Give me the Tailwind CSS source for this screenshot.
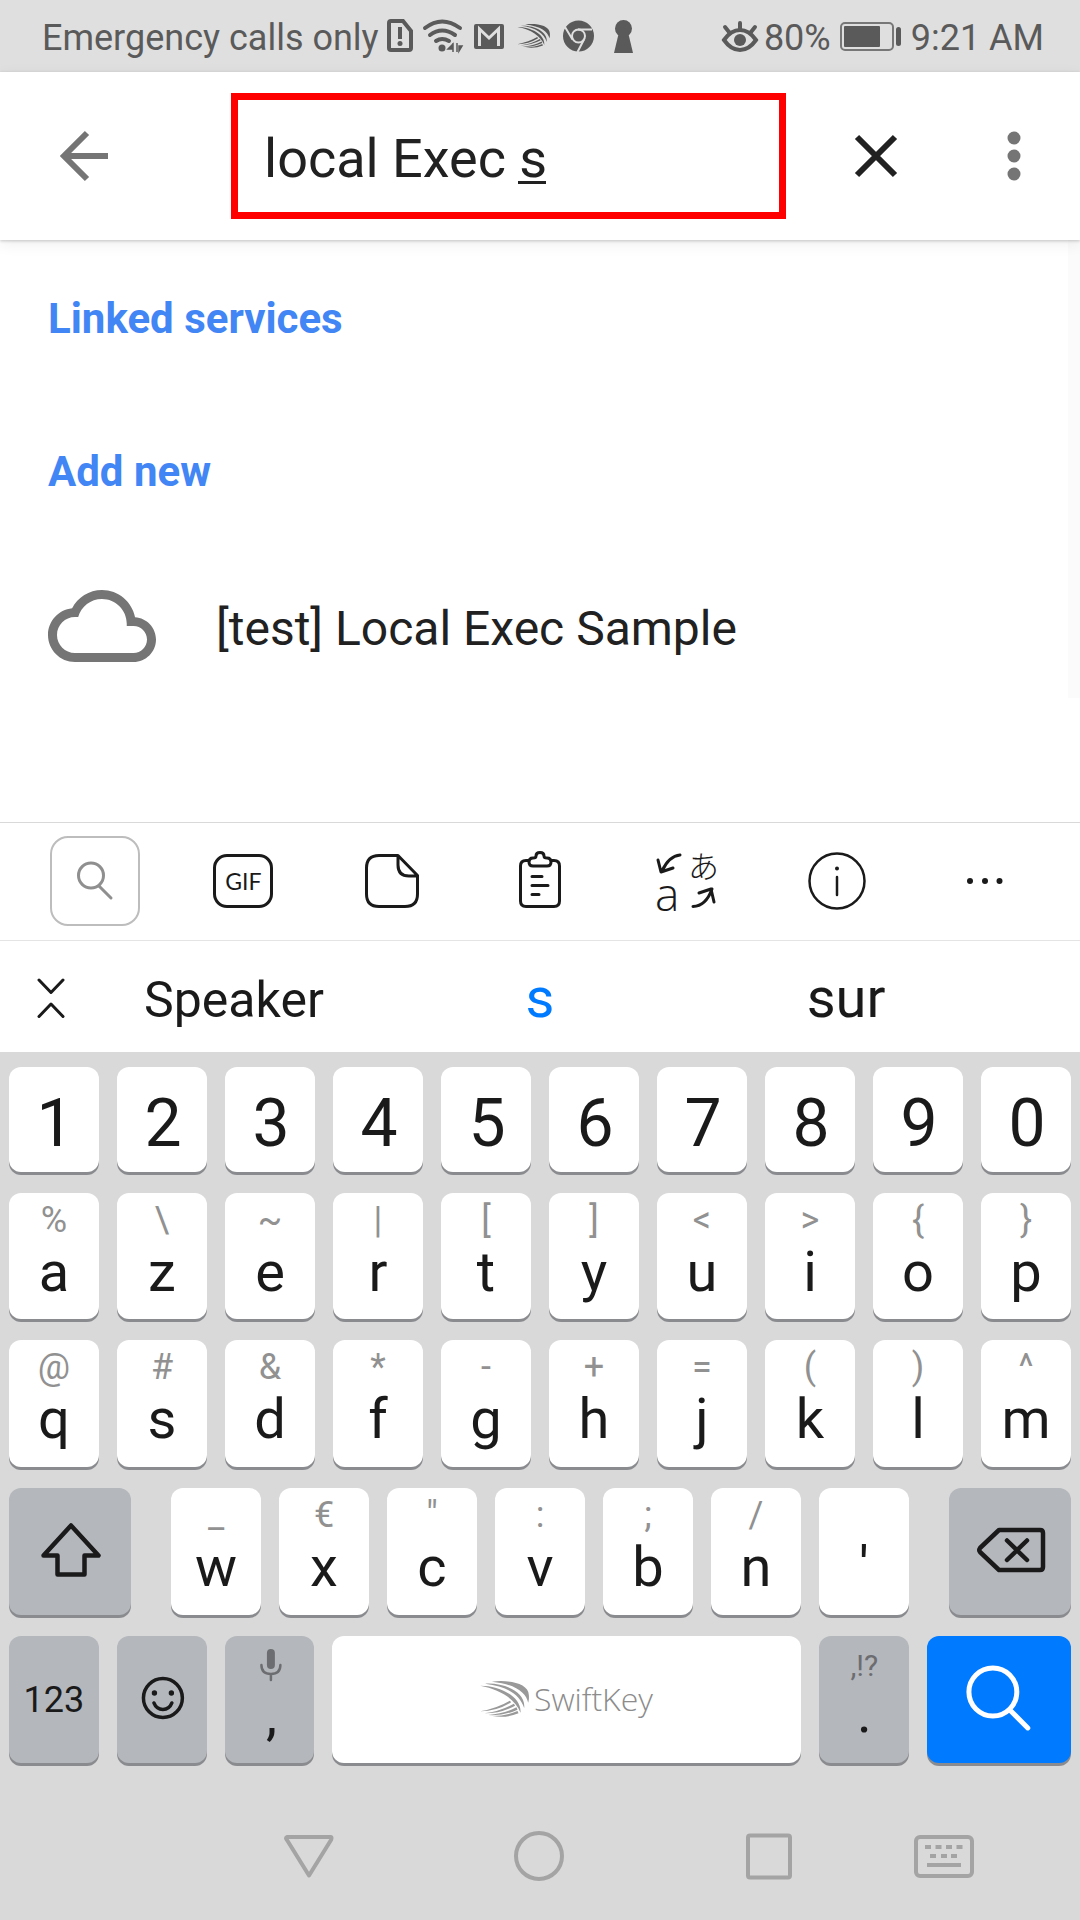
<!DOCTYPE html>
<html lang="en">
<head>
<meta charset="utf-8">
<meta name="viewport" content="width=device-width, initial-scale=1">
<title>Search services</title>
<script src="https://cdn.jsdelivr.net/npm/@tailwindcss/browser@4"></script>
</head>
<body class="flex min-h-screen flex-col bg-white font-['Roboto',sans-serif] text-[#212121]">

<!-- Status bar -->
<div class="flex h-[72px] shrink-0 items-center justify-between bg-[#dfdfdf] pl-[42px] pr-9 text-[36px] leading-[72px] text-[#5a5a5a]">
  <div class="flex items-center">
    <span class="whitespace-nowrap pt-[3px]">Emergency calls only</span>
    <svg class="ml-[5px] h-[72px] w-[254px] shrink-0" viewBox="384 0 254 72" fill="none" stroke="#5a5a5a" aria-hidden="true">
      <path d="M391 21h12l8 10v17q0 2-2 2h-18q-2 0-2-2V23q0-2 2-2z" stroke-width="4"/>
      <path d="M400 27v12" stroke-width="4"/><circle cx="400" cy="43.500" r="2.500" fill="#5a5a5a" stroke="none"/>
      <g stroke-width="4" stroke-linecap="round"><path d="M425 28q17-13 35 0M430 35q12-9 25 0M436 41q6-4 13 0"/></g>
      <circle cx="442" cy="48" r="3.500" fill="#5a5a5a" stroke="none"/>
      <path d="M453 43v9M453 44l-5 5h5zM457 43v9M459 46h3l-3 5z" fill="#5a5a5a" stroke-width="1.500"/>
      <rect x="474" y="24" width="30" height="25" rx="2" fill="#5a5a5a" stroke="none"/>
      <path d="M479.500 46V29L489 38L498.500 29V46" stroke="#dfdfdf" stroke-width="3"/>
      <g transform="translate(517 23.500) scale(.222) translate(-178 -91)" fill="#5a5a5a" stroke="none">
        <path d="M215 95C262 89 325 98 326 135C327 145 326 152 324 158C318 128 285 102 215 95Z"/>
        <path d="M195 101C250 97 318 125 312 174C300 135 262 109 195 101Z"/>
        <path d="M180 107C240 107 305 140 301 188C285 147 240 118 180 107Z"/>
        <path d="M180 184Q232 174 269 152L273 157Q230 184 180 184ZM192 190Q242 184 281 161L285 167Q242 190 192 190ZM204 195Q252 192 289 172L292 179Q252 198 204 195ZM217 198Q258 198 292 183L295 190Q258 205 217 198Z"/>
      </g>
      <circle cx="578.500" cy="36" r="15.500" fill="#5a5a5a" stroke="none"/>
      <g stroke="#dfdfdf" stroke-width="2"><circle cx="578.500" cy="36" r="6.500"/><path d="M578 29.500h14M572.500 39.500L565 27M584 39.500L577.500 52"/></g>
      <circle cx="623.500" cy="28.500" r="8.500" fill="#5a5a5a" stroke="none"/><path d="M619 32h9l5 21h-19z" fill="#5a5a5a" stroke="none"/>
    </svg>
  </div>
  <div class="flex items-center">
    <svg class="h-[72px] w-[40px] shrink-0" viewBox="721 0 40 72" fill="none" stroke="#5a5a5a" stroke-width="4" stroke-linecap="round" aria-hidden="true">
      <path d="M725 40q7-10 16-10t16 10q-7 10-16 10t-16-10z"/><path d="M741 23v6M726 27l4 5M756 27l-4 5"/><circle cx="741" cy="40" r="6" fill="#5a5a5a" stroke="none"/>
    </svg>
    <span class="ml-1 pt-[3px]">80%</span>
    <svg class="ml-2 h-[72px] w-[64px] shrink-0" viewBox="840 0 64 72" aria-hidden="true">
      <rect x="842" y="23" width="52" height="27" rx="4" fill="none" stroke="#777" stroke-width="2"/>
      <rect x="845" y="26" width="36" height="21" rx="1" fill="#5a5a5a"/><rect x="897" y="27" width="5" height="19" rx="2.500" fill="#5a5a5a"/>
    </svg>
    <time class="ml-2 whitespace-nowrap pt-[3px]">9:21 AM</time>
  </div>
</div>

<!-- Search header -->
<header class="z-10 flex h-[168px] shrink-0 items-center bg-white pl-9 pr-5 shadow-[0_1px_3px_rgba(0,0,0,0.2),0_4px_14px_rgba(0,0,0,0.07)]">
  <button class="shrink-0" aria-label="Back">
    <svg class="size-24" viewBox="36 108 96 96" fill="none" stroke="#757575" stroke-width="6"><path d="M108 156H64M87 133L64 156L87 179"/></svg>
  </button>
  <label class="relative ml-[99px] block h-[126px] min-w-0 flex-1 border-[7px] border-[#ff0000]">
    <input type="text" aria-label="Search" value="local Exec s" spellcheck="false" class="h-full w-full bg-transparent pl-[26px] pt-1 text-[54px] text-[#212121] outline-none">
    <span class="absolute left-[280px] top-[81px] h-[3px] w-[28px] bg-[#212121]" aria-hidden="true"></span>
  </label>
  <button class="ml-[42px] shrink-0" aria-label="Clear">
    <svg class="size-24" viewBox="828 108 96 96" fill="none" stroke="#212121" stroke-width="6"><path d="M857 137L895 175M895 137L857 175"/></svg>
  </button>
  <button class="ml-[54px] shrink-0" aria-label="More options">
    <svg class="h-24 w-[82px]" viewBox="978 108 82 96" fill="#757575"><circle cx="1014" cy="138" r="6.500"/><circle cx="1014" cy="156" r="6.500"/><circle cx="1014" cy="174" r="6.500"/></svg>
  </button>
</header>

<!-- Results -->
<main class="flex flex-1">
  <div class="flex-1 px-12 pt-[54px]">
    <h2 class="text-[42px] font-bold leading-[50px] text-[#4285f4]">Linked services</h2>
    <h2 class="mt-[103px] text-[42px] font-bold leading-[50px] text-[#4285f4]">Add new</h2>
    <a href="#" class="mt-[75px] flex items-center text-[48px] leading-[64px]">
      <svg class="size-[108px] shrink-0" viewBox="0 0 24 24" fill="#757575" aria-hidden="true"><path d="M19.350 10.040C18.670 6.590 15.640 4 12 4 9.110 4 6.610 5.640 5.360 8.040 2.350 8.360 0 10.910 0 14c0 3.310 2.690 6 6 6h13c2.760 0 5-2.240 5-5 0-2.640-2.050-4.780-4.650-4.960zM19 18H6c-2.210 0-4-1.790-4-4s1.790-4 4-4h.710C7.370 7.690 9.480 6 12 6c3.040 0 5.500 2.460 5.500 5.500v.500H19c1.660 0 3 1.340 3 3s-1.340 3-3 3z"/></svg>
      <span class="ml-[60px] pt-1.5">[test] Local Exec Sample</span>
    </a>
  </div>
  <div class="h-[458px] w-3 bg-[#fbfbfb]"></div>
</main>

<!-- Keyboard toolbar -->
<section class="grid h-[118px] shrink-0 grid-cols-7 items-center justify-items-center border-t border-[#d9d9d9] px-[21px] pb-0.5" aria-label="Keyboard toolbar">
  <button aria-label="Search" class="size-[90px] rounded-[18px] border-2 border-[#bdbdbd]">
    <svg class="size-full" viewBox="52 838 86 86" fill="none" stroke="#8f8f8f" stroke-width="3" stroke-linecap="round"><circle cx="91" cy="875.500" r="12.500"/><path d="M99 886L111 898"/></svg>
  </button>
  <button aria-label="GIF" class="h-[54px] w-[60px] rounded-[14px] border-3 border-[#1a1a1a] text-center font-['Lato',sans-serif] text-[23px] leading-[48px] text-[#1a1a1a]">GIF</button>
  <button aria-label="Stickers">
    <svg class="size-[90px]" viewBox="347 836 90 90" fill="none" stroke="#1a1a1a" stroke-width="3" stroke-linejoin="round"><path d="M398 855.500h-19q-12.500 0-12.500 12.500v26q0 12.500 12.500 12.500h26q12.500 0 12.500-12.500V875.500zM398 855.500V865q0 11 11 11h8.500"/></svg>
  </button>
  <button aria-label="Clipboard">
    <svg class="size-[90px]" viewBox="495 836 90 90" fill="none" stroke="#1a1a1a" stroke-width="3" stroke-linecap="round" stroke-linejoin="round"><path d="M529 860.500h-3q-5.500 0-5.500 5.500v35q0 5.500 5.500 5.500h28q5.500 0 5.500-5.500v-35q0-5.500-5.500-5.500h-3"/><path d="M533 866h14q4 0 4-4t-4-4q-3 0-3-2 0-3.500-4-3.500t-4 3.500q0 2-3 2-4 0-4 4t4 4zM532 876.500h10M532 885.500h16M532 894.500h7"/></svg>
  </button>
  <button aria-label="Translate">
    <svg class="size-[90px]" viewBox="643 836 90 90" fill="none" stroke="#1a1a1a" stroke-width="3" stroke-linecap="round" stroke-linejoin="round"><path d="M680 855Q669 856 662 871M658 860L661 872L673 868M693 906.500Q706 906 712 889M699 893L711 889L714 902"/><text x="688" y="877.500" font-family="Noto Sans CJK JP, sans-serif" font-weight="300" font-size="31" fill="#1a1a1a" stroke="none">あ</text><text x="655" y="911" font-family="Open Sans, sans-serif" font-weight="300" font-size="46" fill="#1a1a1a" stroke="none">a</text></svg>
  </button>
  <button aria-label="Information">
    <svg class="size-[90px]" viewBox="792 836 90 90" fill="none" stroke="#1a1a1a" stroke-width="2.500" stroke-linecap="round"><circle cx="837" cy="881" r="27.500"/><path d="M837 877v18"/><circle cx="837" cy="868.500" r="1" fill="#1a1a1a" stroke-width="2"/></svg>
  </button>
  <button aria-label="More">
    <svg class="size-[90px]" viewBox="940 836 90 90" fill="#1a1a1a"><circle cx="970" cy="881" r="3"/><circle cx="985" cy="881" r="3"/><circle cx="999.500" cy="881" r="3"/></svg>
  </button>
</section>

<!-- Word suggestions -->
<section class="flex h-[112px] shrink-0 items-center border-t border-[#e4e4e4] pt-0.5 text-[#1a1a1a]" aria-label="Suggestions">
  <button class="w-[81px]" aria-label="Collapse suggestions">
    <svg class="h-[60px] w-full" viewBox="0 969 81 60" fill="none" stroke="#1a1a1a" stroke-width="3" stroke-linecap="round" stroke-linejoin="round"><path d="M39 981L51 993.500L63 981M39 1017.500L51 1005L63 1017.500"/></svg>
  </button>
  <div class="grid flex-1 grid-cols-3 items-baseline pr-[81px] pt-0.5 text-center text-[56px] leading-[64px]">
    <button class="text-[50px]">Speaker</button>
    <button class="text-[#007aff]">s</button>
    <button>sur</button>
  </div>
</section>

<!-- Keys -->
<section class="flex shrink-0 flex-col gap-[21px] bg-[#d9d9d9] px-[9px] pb-[3px] pt-[15px] text-[56px] leading-[64px] text-[#1a1a1a]" aria-label="Keyboard">
  <div class="grid h-[105px] grid-cols-10 gap-[18px] text-[66px] *:rounded-xl *:bg-white *:pl-0.5 *:pt-[9px] *:shadow-[0_3px_0_#8a8b8f]">
    <button>1</button><button>2</button><button>3</button><button>4</button><button>5</button><button>6</button><button>7</button><button>8</button><button>9</button><button>0</button>
  </div>
  <div class="grid h-[126px] grid-cols-10 gap-[18px] *:flex *:flex-col *:items-center *:rounded-xl *:bg-white *:pt-[7px] *:shadow-[0_3px_0_#8a8b8f] [&_small]:text-[36px] [&_small]:leading-10 [&_small]:text-[#919191]">
    <button><small>%</small>a</button><button><small>\</small>z</button><button><small>~</small>e</button><button><small>|</small>r</button><button><small>[</small>t</button><button><small>]</small>y</button><button><small>&lt;</small>u</button><button><small>&gt;</small>i</button><button><small>{</small>o</button><button><small>}</small>p</button>
  </div>
  <div class="grid h-[127px] grid-cols-10 gap-[18px] *:flex *:flex-col *:items-center *:rounded-xl *:bg-white *:pt-[7px] *:shadow-[0_3px_0_#8a8b8f] [&_small]:text-[36px] [&_small]:leading-10 [&_small]:text-[#919191]">
    <button><small>@</small>q</button><button><small>#</small>s</button><button><small>&amp;</small>d</button><button><small>*</small>f</button><button><small>-</small>g</button><button><small>+</small>h</button><button><small>=</small>j</button><button><small>(</small>k</button><button><small>)</small>l</button><button><small>^</small>m</button>
  </div>
  <div class="flex h-[127px] gap-10">
    <button class="flex-[122] rounded-xl bg-[#b4b7bc] shadow-[0_3px_0_#8a8b8f]" aria-label="Shift">
      <svg class="h-full w-full" viewBox="9 1488 122 127" fill="none" stroke="#1a1a1a" stroke-width="4.500" stroke-linejoin="round"><path d="M71 1525.500L98.500 1555.500H84.500V1574.500H57.500V1555.500H43.500Z"/></svg>
    </button>
    <div class="grid flex-[738] grid-cols-7 gap-[18px] *:flex *:flex-col *:items-center *:rounded-xl *:bg-white *:pt-[7px] *:shadow-[0_3px_0_#8a8b8f] [&_small]:h-10 [&_small]:text-[36px] [&_small]:leading-10 [&_small]:text-[#919191]">
      <button><small>_</small>w</button><button><small>€</small>x</button><button><small>"</small>c</button><button><small>:</small>v</button><button><small>;</small>b</button><button><small>/</small>n</button><button><small></small>'</button>
    </div>
    <button class="flex-[122] rounded-xl bg-[#b4b7bc] shadow-[0_3px_0_#8a8b8f]" aria-label="Backspace">
      <svg class="h-full w-full" viewBox="949 1488 122 127" fill="none" stroke="#1a1a1a" stroke-width="4.500" stroke-linejoin="round" stroke-linecap="round"><path d="M999 1530H1040Q1043 1530 1043 1533V1567Q1043 1570 1040 1570H999L980 1552Q978.500 1550 980 1548ZM1007 1540.500L1027 1560M1027 1540.500L1007 1560"/></svg>
    </button>
  </div>
  <div class="flex h-[127px] gap-[18px] *:rounded-xl *:shadow-[0_3px_0_#8a8b8f]">
    <button class="flex-[90] bg-[#b4b7bc] text-[36px]">123</button>
    <button class="flex-[90] bg-[#b4b7bc]" aria-label="Emoji">
      <svg class="h-full w-full" viewBox="117 1636 90 127" fill="none" stroke="#1a1a1a" stroke-width="3.500" stroke-linecap="round"><circle cx="163" cy="1698" r="19.500"/><path d="M154 1703q2.500 6.500 9 6.500t9-6.500"/><circle cx="154.500" cy="1693" r="2.700" fill="#1a1a1a" stroke="none"/><circle cx="171.500" cy="1693" r="2.700" fill="#1a1a1a" stroke="none"/></svg>
    </button>
    <button class="flex flex-[90] flex-col items-center bg-[#b4b7bc]" aria-label="Comma, voice input">
      <svg class="h-[47px] w-full" viewBox="225 1636 90 47" fill="none" stroke="#6c6d70" stroke-width="2.500" stroke-linecap="round"><rect x="267" y="1649" width="8" height="20" rx="4" fill="#6c6d70" stroke="none"/><path d="M261.500 1665q0 9 9.500 9t9.500-9M271 1674v6"/></svg>
      <span class="pl-1">,</span>
    </button>
    <button class="flex flex-[468] items-center justify-center bg-white pb-0.5 pr-0.5 font-['Open_Sans',sans-serif] text-[32px] font-light text-[#8c8c8c]">
      <svg class="mr-1 h-[38px] w-[51px]" viewBox="177 90 152 114" fill="#999" aria-hidden="true">
        <path d="M215 95C262 89 325 98 326 135C327 145 326 152 324 158C318 128 285 102 215 95Z"/>
        <path d="M195 101C250 97 318 125 312 174C300 135 262 109 195 101Z"/>
        <path d="M180 107C240 107 305 140 301 188C285 147 240 118 180 107Z"/>
        <path d="M180 184Q232 174 269 152L273 157Q230 184 180 184ZM192 190Q242 184 281 161L285 167Q242 190 192 190ZM204 195Q252 192 289 172L292 179Q252 198 204 195ZM217 198Q258 198 292 183L295 190Q258 205 217 198Z"/>
      </svg>
      SwiftKey
    </button>
    <button class="flex flex-[90] flex-col items-center bg-[#b4b7bc] pt-[10px]"><small class="h-[35px] text-[30px] leading-10 text-[#6c6d70]">,!?</small>.</button>
    <button class="flex-[144] bg-[#007aff]" aria-label="Search">
      <svg class="h-full w-full" viewBox="927 1636 144 127" fill="none" stroke="#fff" stroke-width="5" stroke-linecap="round"><circle cx="993" cy="1692" r="24"/><path d="M1010 1710L1028 1728"/></svg>
    </button>
  </div>
</section>

<!-- System navigation -->
<nav class="flex h-[154px] shrink-0 items-center gap-[21px] bg-[#d9d9d9] pl-[194px] pr-[97px] pt-[26px]" aria-label="System navigation">
  <div class="grid flex-1 grid-cols-3 justify-items-center">
    <button aria-label="Back"><svg class="size-[60px]" viewBox="279 1826 60 60" fill="none" stroke="#a4a4a4" stroke-width="4" stroke-linejoin="round"><path d="M287 1837H331Q332 1838 331 1840L309 1875.500L287 1840Q285 1838 287 1837Z"/></svg></button>
    <button aria-label="Home"><svg class="size-[60px]" viewBox="510 1826 60 60" fill="none" stroke="#a4a4a4" stroke-width="4"><circle cx="540" cy="1856" r="23"/></svg></button>
    <button aria-label="Recent apps"><svg class="size-[60px]" viewBox="739 1826 60 60" fill="none" stroke="#a4a4a4" stroke-width="4"><rect x="748" y="1835.500" width="42" height="42" rx="2"/></svg></button>
  </div>
  <button class="shrink-0" aria-label="Switch keyboard"><svg class="h-[60px] w-[78px]" viewBox="905 1826 78 60" fill="#a4a4a4"><rect x="916" y="1837" width="56" height="39" rx="4" fill="none" stroke="#a4a4a4" stroke-width="4"/><path d="M925 1845h6v4h-6zM935.500 1845h6v4h-6zM946 1845h6v4h-6zM956.500 1845h6v4h-6zM930 1854h6v4h-6zM941 1854h6v4h-6zM951 1854h6v4h-6zM927 1863h34v4h-34z"/></svg></button>
</nav>
</body>
</html>
